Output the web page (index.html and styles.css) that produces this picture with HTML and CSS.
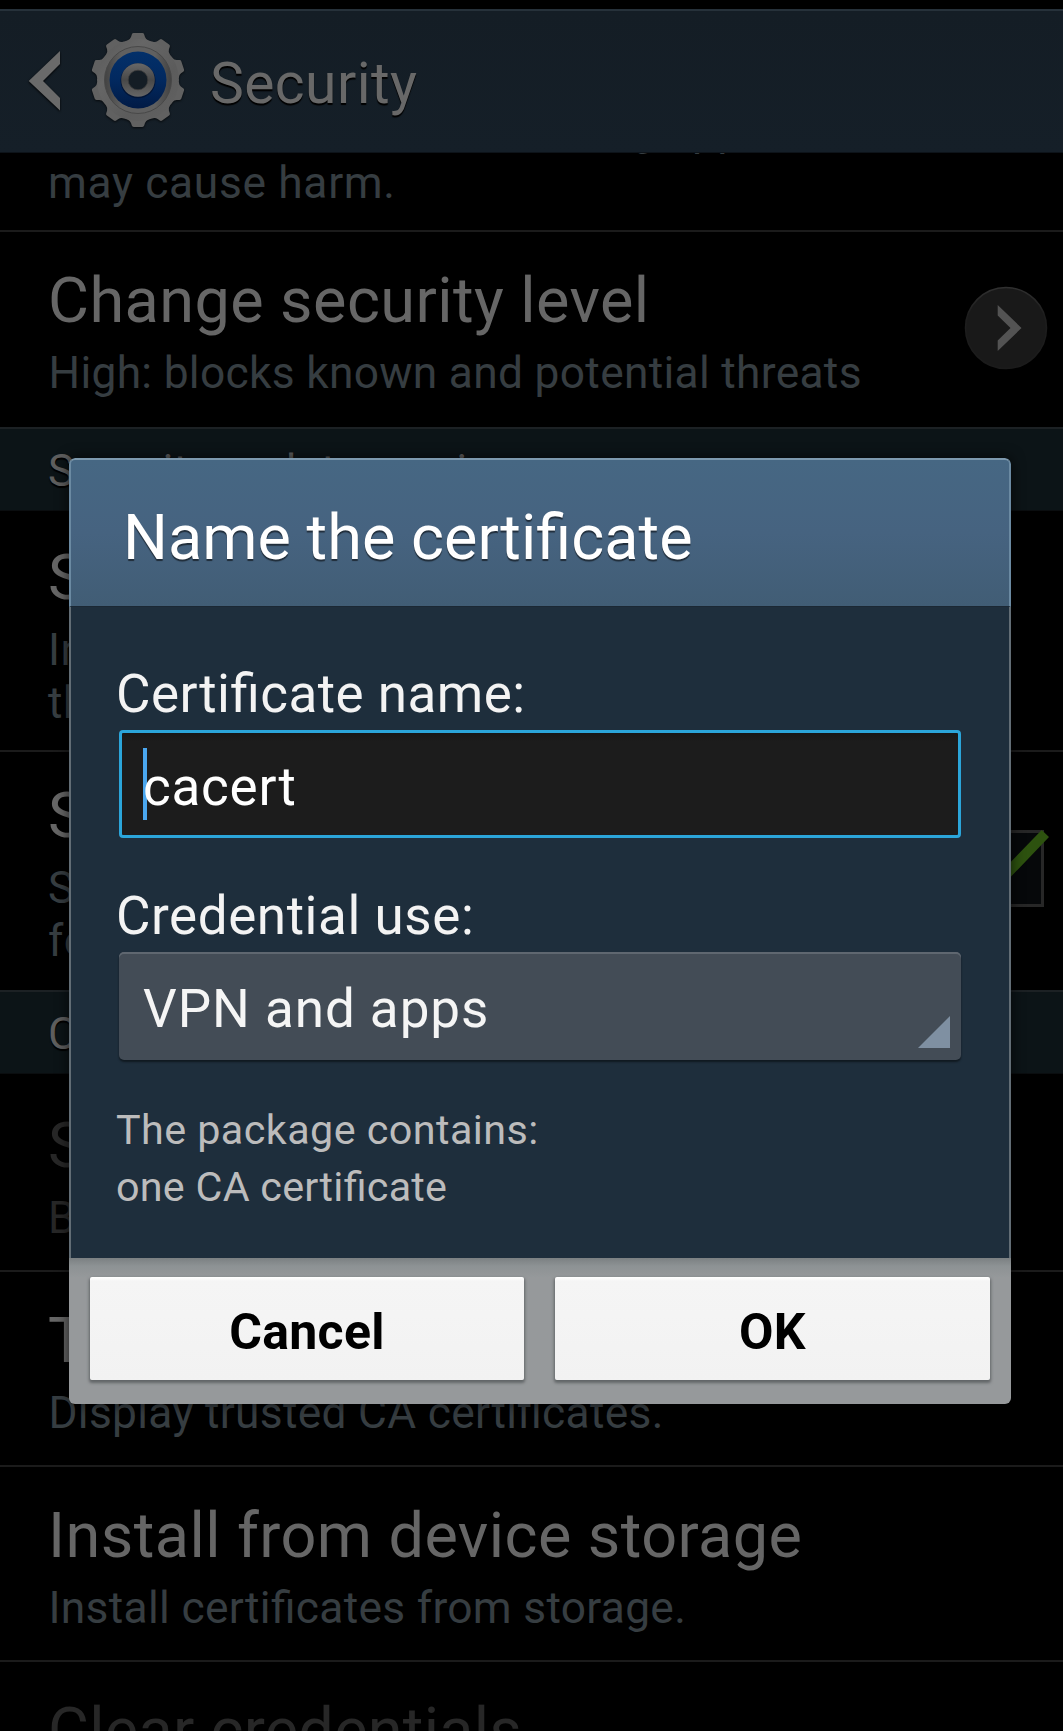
FILE: index.html
```html
<!DOCTYPE html>
<html lang="en">
<head>
<meta charset="utf-8">
<title>Security</title>
<link rel="stylesheet" href="styles.css">
</head>
<body>
<div class="screen">
  <header class="action-bar">
    <svg class="back" width="34" height="62" viewBox="0 0 34 62"><path class="mark" d="M32 1V14L15 31L32 48V60.500L.7 31Z"/></svg>
    <svg class="gear" width="100" height="100" viewBox="-50 -50 100 100">
      <defs>
        <linearGradient id="metal" x1="0" y1="0" x2="1" y2="1">
          <stop offset="0" stop-color="#585858"/><stop offset=".3" stop-color="#666"/><stop offset=".65" stop-color="#5c5c5c"/><stop offset="1" stop-color="#626262"/>
        </linearGradient>
        <linearGradient id="rim" x1="0" y1="0" x2="1" y2="0">
          <stop offset="0" stop-color="#424242"/><stop offset=".25" stop-color="#606060"/><stop offset=".75" stop-color="#606060"/><stop offset="1" stop-color="#424242"/>
        </linearGradient>
        <linearGradient id="blue" x1="0" y1="0" x2="0" y2="1">
          <stop offset="0" stop-color="#03306a"/><stop offset=".5" stop-color="#02295f"/><stop offset="1" stop-color="#011a45"/>
        </linearGradient>
        <linearGradient id="hub" x1="0" y1="0" x2="0" y2="1">
          <stop offset="0" stop-color="#686868"/><stop offset=".5" stop-color="#484848"/><stop offset="1" stop-color="#666"/>
        </linearGradient>
        <path id="tooth" d="M-11.500 -36L-10.500 -39.500Q-7.800 -40.700 -7 -43L-6.200 -45.600Q-5.800 -47 -4.300 -47H4.300Q5.800 -47 6.200 -45.600L7 -43Q7.800 -40.700 10.500 -39.500L11.500 -36Z"/>
      </defs>
      <g fill="#616161">
        <use href="#tooth"/><use href="#tooth" transform="rotate(36)"/><use href="#tooth" transform="rotate(72)"/><use href="#tooth" transform="rotate(108)"/><use href="#tooth" transform="rotate(144)"/><use href="#tooth" transform="rotate(180)"/><use href="#tooth" transform="rotate(216)"/><use href="#tooth" transform="rotate(252)"/><use href="#tooth" transform="rotate(288)"/><use href="#tooth" transform="rotate(324)"/>
      </g>
      <circle r="41" fill="url(#metal)"/>
      <circle r="33.500" fill="url(#rim)" stroke="#484848"/>
      <circle r="28.500" fill="url(#blue)"/>
      <circle r="17.500" cy=".8" fill="#011436"/>
      <circle r="16.800" fill="url(#hub)"/>
      <circle r="9.800" fill="#141d25" stroke="#3c3c3c" stroke-width=".8"/>
    </svg>
    <h1 class="bar-title">Security</h1>
  </header>

  <main class="list">
    <section class="row row-first">
      <p class="summary">Block or warn before installing apps that<br><span class="loose">may cause harm.</span></p>
    </section>
    <section class="row row-level">
      <div>
        <h2 class="title">Change security level</h2>
        <p class="summary fit">High: blocks known and potential threats</p>
      </div>
      <svg class="go" width="84" height="84" viewBox="-42 -42 84 84">
        <defs><linearGradient id="disc" x1="0" y1="0" x2="0" y2="1"><stop offset="0" stop-color="#303030"/><stop offset=".35" stop-color="#1d1d1d"/><stop offset="1" stop-color="#1b1b1b"/></linearGradient></defs>
        <circle r="40.500" fill="#191919" stroke="url(#disc)" stroke-width="1.500"/>
        <path fill="#535353" d="M-8.300 -23L15.500 0L-8.300 23V12.500L4.500 0L-8.300 -12.500Z"/>
      </svg>
    </section>
    <h3 class="category">Security update service</h3>
    <section class="row row-tall after-category">
      <div>
        <h2 class="title">Security policy updates</h2>
        <p class="summary">Increase your security by updating<br>the security policy.</p>
      </div>
    </section>
    <section class="row row-tall">
      <div>
        <h2 class="title">Send security reports</h2>
        <p class="summary">Send security reports via Wi-Fi<br>for threat analysis.</p>
      </div>
      <svg class="check" width="86" height="80" viewBox="0 0 86 80">
        <rect x="4.500" y="2.500" width="74" height="74" fill="#06080a" stroke="#272727" stroke-width="3"/>
        <path fill="#2d520f" d="M77.700 1L85 8L38 57L14 33L21 26L38 42Z"/>
      </svg>
    </section>
    <h3 class="category">Credential storage</h3>
    <section class="row after-category disabled">
      <div>
        <h2 class="title">Storage type</h2>
        <p class="summary">Back up to hardware.</p>
      </div>
    </section>
    <section class="row">
      <div>
        <h2 class="title">Trusted credentials</h2>
        <p class="summary fit">Display trusted CA certificates.</p>
      </div>
    </section>
    <section class="row">
      <div>
        <h2 class="title">Install from device storage</h2>
        <p class="summary fit">Install certificates from storage.</p>
      </div>
    </section>
    <section class="row disabled">
      <div>
        <h2 class="title">Clear credentials</h2>
      </div>
    </section>
  </main>

  <div class="dialog">
    <h2 class="dialog-title">Name the certificate</h2>
    <div class="dialog-body">
      <div class="label">Certificate name:</div>
      <div class="input"><span class="cursor"></span>cacert</div>
      <div class="label label-use">Credential use:</div>
      <div class="select">VPN and apps<svg class="corner" width="32" height="32" viewBox="0 0 32 32"><path fill="#7f90a2" d="M32 0V32H0Z"/></svg></div>
      <p class="package">The package contains:<br><span class="tight">one CA certificate</span></p>
    </div>
    <div class="dialog-footer">
      <div class="button cancel">Cancel</div>
      <div class="button">OK</div>
    </div>
  </div>
</div>
</body>
</html>
```
FILE: styles.css
```css
* { box-sizing: border-box; margin: 0; padding: 0; }
body { background: #000; font-family: Roboto, "Noto Sans", sans-serif; font-feature-settings: "liga" 1; }
svg { display: block; flex: none; }
h1, h2, h3 { font-weight: 400; }

.screen { position: relative; width: 1063px; height: 1731px; padding-top: 9px; overflow: hidden; }

.action-bar {
  display: flex;
  height: 144px;
  border-top: 2px solid #26313a;
  border-bottom: 1px solid #0d1319;
  background: linear-gradient(#141d25, #151f28);
  padding-left: 28px;
}
.back { margin-top: 39px; filter: drop-shadow(0 1px 1px #000); }
.mark { fill: #6a6a6a; }
.gear { margin: 19px 0 0 26px; filter: drop-shadow(0 1px 1px rgba(0,0,0,.7)); }
.bar-title {
  margin-left: 22px;
  padding-top: 1px;
  font-size: 57px;
  line-height: 143px;
  letter-spacing: .4px;
  color: #686868;
  text-shadow: 0 2px 1px #000;
}

.list { height: 1578px; overflow: hidden; }
.row {
  display: flex;
  justify-content: space-between;
  height: 195px;
  padding: 32px 17px 0 48px;
  border-top: 2px solid #1b1b1b;
  overflow: hidden;
  white-space: nowrap;
}
.title { font-size: 63px; line-height: 74px; letter-spacing: .42px; color: #666; }
.summary { margin-top: 9px; font-size: 44.3px; line-height: 52.500px; letter-spacing: .4px; color: #363d41; }
.fit { letter-spacing: .3px; padding-left: .5px; }
.loose { letter-spacing: .67px; }
.row-first { height: 77px; align-items: flex-end; padding-top: 0; padding-bottom: 21px; border-top: 0; }
.row-level { height: 197px; }
.go { margin: 22px -1.500px 0 0; }
.row-tall { height: 240px; padding-top: 27px; }
.check { margin: 50px -4px 0 0; }
.after-category { height: 196px; border-top: 0; padding-top: 35px; }
.row-tall.after-category { height: 239px; padding-top: 30px; }
.disabled .title, .disabled .summary { color: #272727; }
.disabled .title { letter-spacing: .25px; }
.category {
  height: 84px;
  padding: 2px 48px 0;
  border-top: 2px solid #1c2124;
  border-bottom: 1px solid #0a0d0f;
  background: #0c1417;
  font-size: 44.3px;
  line-height: 80px;
  letter-spacing: .4px;
  color: #5e5e5e;
  text-shadow: 0 2px 1px #000;
}

.dialog {
  position: absolute;
  left: 69px;
  top: 458px;
  display: flex;
  flex-direction: column;
  width: 942px;
  height: 946px;
  border-radius: 6px;
  overflow: hidden;
  box-shadow: 0 0 14px rgba(0,0,0,.7);
}
.dialog-title {
  height: 149px;
  padding: 8px 52px 0;
  border: 2px solid #6b8aa2;
  border-top-color: #7d99ae;
  border-bottom: 1px solid #1b2834;
  border-radius: 6px 6px 0 0;
  background: linear-gradient(#466783, #466380 50%, #415d75);
  font-size: 63px;
  line-height: 139px;
  letter-spacing: .02px;
  color: #fff;
  text-shadow: 0 2px 1px rgba(0,0,0,.55);
}
.dialog-body {
  height: 651px;
  padding: 56px 48px 0;
  border: solid #626d75;
  border-width: 0 2px;
  background: #1e2e3c;
}
.label { margin: 0 -3px 5px; font-size: 53px; line-height: 62px; letter-spacing: .47px; color: #f3f3f3; }
.label-use { margin-top: 47px; letter-spacing: .56px; }
.input {
  position: relative;
  z-index: 0;
  height: 108px;
  padding: 6px 0 0 21px;
  border: 3px solid #2ba5da;
  border-radius: 4px;
  background: linear-gradient(#171717, #1c1c1c 8px);
  font-size: 53px;
  line-height: 97px;
  letter-spacing: .75px;
  color: #fff;
}
.cursor { position: absolute; left: 21px; top: 15px; width: 4px; height: 72px; background: #4aa7f0; z-index: -1; }
.select {
  display: flex;
  justify-content: space-between;
  height: 108px;
  padding: 6px 11px 0 24px;
  border-radius: 5px;
  background: #434c56;
  box-shadow: inset 0 2px 0 #5f6770, 0 2px 2px #101920;
  font-size: 53px;
  line-height: 102px;
  letter-spacing: .95px;
  color: #f5f5f5;
}
.corner { margin-top: 58px; }
.package { margin: 42px -3px 0; font-size: 41.3px; line-height: 57px; letter-spacing: .43px; color: #bcbcbc; }
.tight { letter-spacing: .25px; }
.dialog-footer {
  display: flex;
  gap: 31px;
  height: 146px;
  padding: 19px 21px 24px;
  background: linear-gradient(#7b8082, #8d9294 8px, #96999b 20px);
}
.button {
  flex: 1;
  padding-top: 7px;
  border-radius: 2px;
  background: linear-gradient(#fff, #f5f5f5 4px, #f2f2f2);
  box-shadow: 0 2px 3px 1px #626668;
  font-size: 50px;
  font-weight: 700;
  line-height: 96px;
  letter-spacing: .25px;
  text-align: center;
  color: #000;
}
.cancel { flex: 0 0 434px; }
```
